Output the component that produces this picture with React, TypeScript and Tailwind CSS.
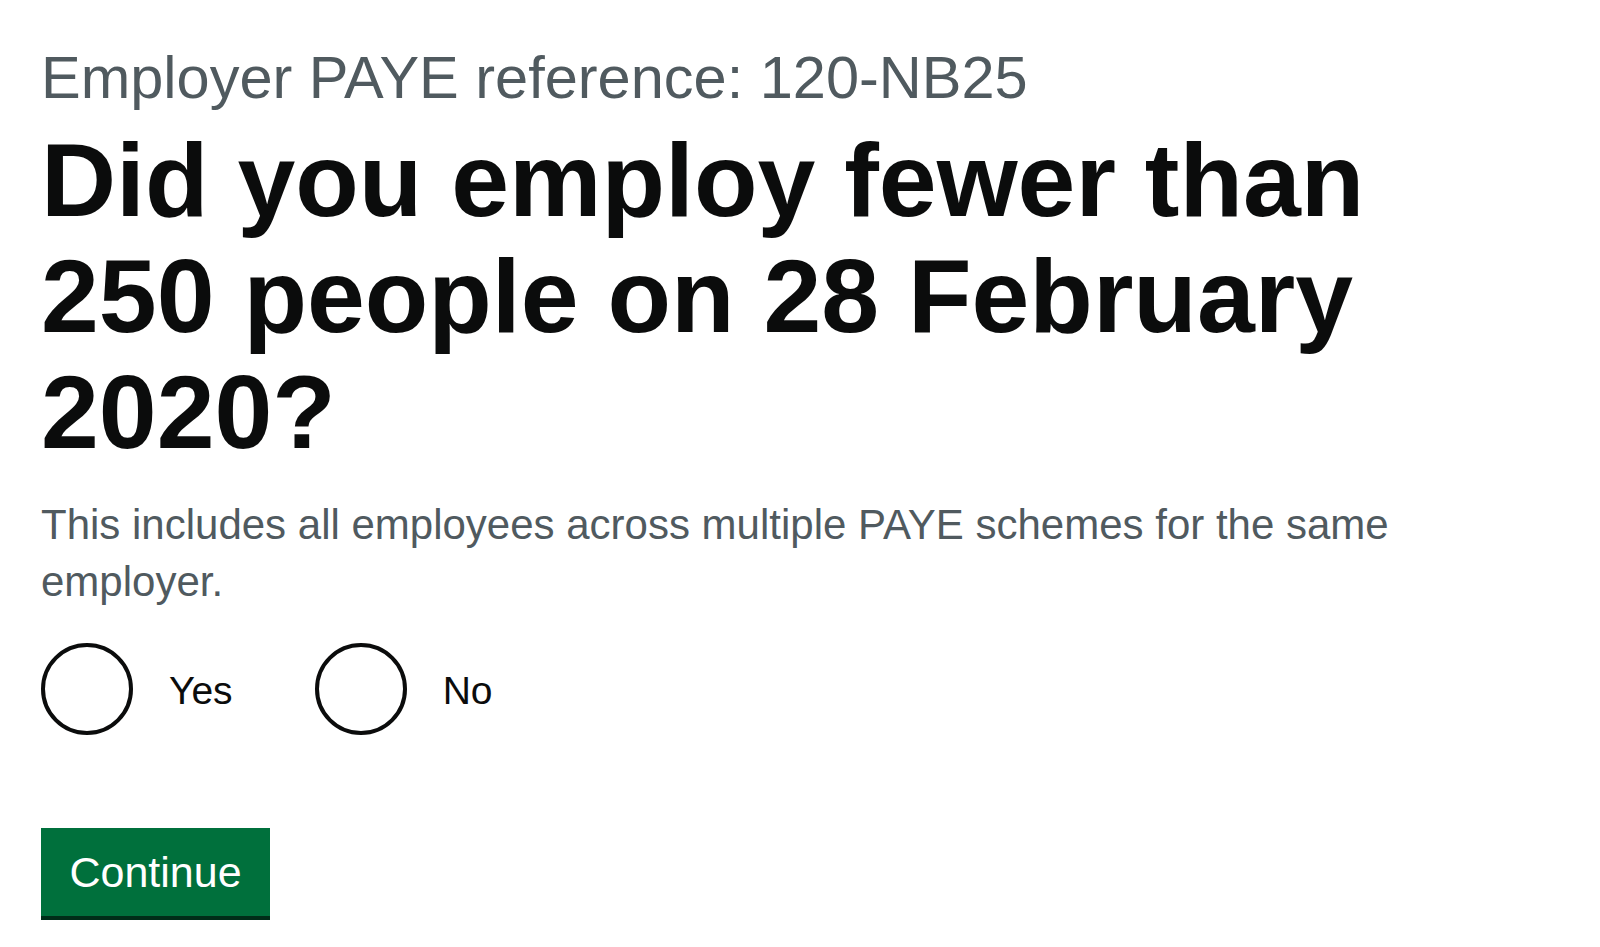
import { FC, useState } from "react";

type RadioProps = {
  label: string;
  checked: boolean;
  onChange: () => void;
};

const Radio: FC<RadioProps> = ({ label, checked, onChange }) => (
  <label className="flex items-center mr-[46px] cursor-pointer" onClick={onChange}>
    <span className="w-[92px] h-[92px] rounded-full border-[4px] border-[#0b0c0c] flex items-center justify-center shrink-0">
      {checked && <span className="w-[46px] h-[46px] rounded-full bg-[#0b0c0c]" />}
    </span>
    <span className="pl-[36px] pr-[36px] pt-[4px] text-[39px] leading-[46px] text-[#0b0c0c]">
      {label}
    </span>
  </label>
);

const App: FC = () => {
  const [answer, setAnswer] = useState<"yes" | "no" | null>(null);

  return (
    <div
      className="min-h-screen bg-white pt-[45px] px-[41px]"
      style={{ fontFamily: '"Liberation Sans", Arial, sans-serif' }}
    >
      <span className="block text-[59.5px] leading-[66px] text-[#505a5f]">
        Employer PAYE reference: 120-NB25
      </span>
      <h1 className="mt-[11px] text-[104px] leading-[116px] font-bold text-[#0b0c0c]">
        Did you employ fewer than
        <br />
        250 people on 28 February
        <br />
        2020?
      </h1>
      <p className="mt-[26px] text-[42px] leading-[57px] text-[#505a5f]">
        This includes all employees across multiple PAYE schemes for the same
        <br />
        employer.
      </p>
      <div className="mt-[33px] flex">
        <Radio label="Yes" checked={answer == "yes"} onChange={() => setAnswer("yes")} />
        <Radio label="No" checked={answer == "no"} onChange={() => setAnswer("no")} />
      </div>
      <button className="mt-[93px] w-[229px] h-[88px] bg-[#00703c] text-white text-[43px] leading-none shadow-[0_4px_0_#002d18] flex items-center justify-center">
        Continue
      </button>
    </div>
  );
};

export default App;
